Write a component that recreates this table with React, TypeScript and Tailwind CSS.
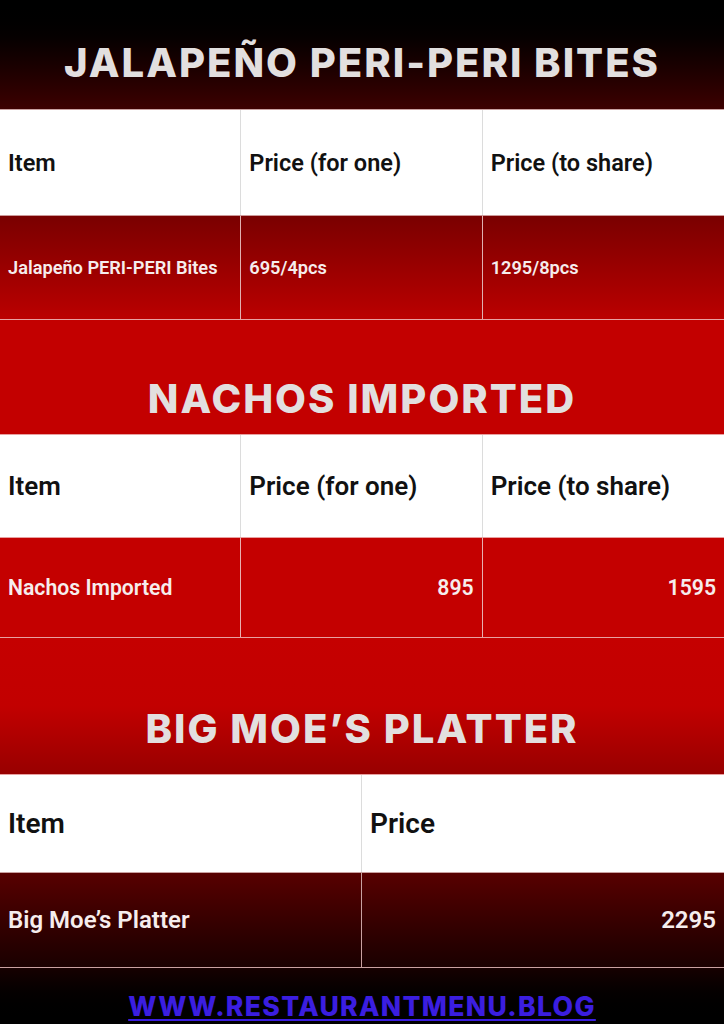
export default function App() {
  return (
    <div className="w-[724px] h-[1024px] flex flex-col overflow-hidden bg-black font-['Roboto',sans-serif]">
      {/* Jalapeño section */}
      <div className="h-[110px] flex items-center justify-center pt-[16px] bg-gradient-to-b from-[#000000] to-[#3d0000] border-b border-[#c9a0a0]">
        <h1 className="font-['Inter',sans-serif] font-extrabold text-[40px] tracking-[0.05em] text-[#e2dfdf] leading-none">
          JALAPEÑO PERI-PERI BITES
        </h1>
      </div>
      <div className="grid grid-cols-3 h-[105px] bg-white">
        <div className="flex items-center pl-[8px] pt-[2px] border-r border-[#dcdcdc] text-[23.5px] font-semibold text-[#111]">Item</div>
        <div className="flex items-center pl-[8px] pt-[2px] border-r border-[#dcdcdc] text-[23.5px] font-semibold text-[#111]">Price (for one)</div>
        <div className="flex items-center pl-[8px] pt-[2px] text-[23.5px] font-semibold text-[#111]">Price (to share)</div>
      </div>
      <div className="grid grid-cols-3 h-[104px] bg-gradient-to-b from-[#7a0000] to-[#bb0000] border-t border-[#c99]">
        <div className="flex items-center px-[8px] border-r border-[#e0b0b0] text-[18.2px] font-semibold text-[#f6eded]">Jalapeño PERI-PERI Bites</div>
        <div className="flex items-center px-[8px] border-r border-[#e0b0b0] text-[18.2px] font-semibold text-[#f6eded]">695/4pcs</div>
        <div className="flex items-center px-[8px] text-[18.2px] font-semibold text-[#f6eded]">1295/8pcs</div>
      </div>

      {/* Nachos section */}
      <div className="h-[116px] flex items-center justify-center pt-[44px] bg-[#c30000] border-t border-[#e8a0a0] border-b">
        <h2 className="font-['Inter',sans-serif] font-extrabold text-[40px] tracking-[0.05em] text-[#e2dfdf] leading-none">
          NACHOS IMPORTED
        </h2>
      </div>
      <div className="grid grid-cols-3 h-[102px] bg-white">
        <div className="flex items-center px-[8px] border-r border-[#dcdcdc] text-[26px] font-semibold text-[#111]">Item</div>
        <div className="flex items-center px-[8px] border-r border-[#dcdcdc] text-[26px] font-semibold text-[#111]">Price (for one)</div>
        <div className="flex items-center px-[8px] text-[26px] font-semibold text-[#111]">Price (to share)</div>
      </div>
      <div className="grid grid-cols-3 h-[100px] bg-[#c40000] border-t border-[#e8a0a0]">
        <div className="flex items-center px-[8px] border-r border-[#e8b0b0] text-[21.2px] font-semibold text-[#f6eded]">Nachos Imported</div>
        <div className="flex items-center justify-end px-[8px] border-r border-[#e8b0b0] text-[21.2px] font-semibold text-[#f6eded]">895</div>
        <div className="flex items-center justify-end px-[8px] text-[21.2px] font-semibold text-[#f6eded]">1595</div>
      </div>

      {/* Big Moe's section */}
      <div className="h-[138px] flex items-center justify-center pt-[46px] bg-gradient-to-b from-[#c50000] via-[#c20000] to-[#980000] border-t border-[#e8a0a0] border-b">
        <h2 className="font-['Inter',sans-serif] font-extrabold text-[40px] tracking-[0.05em] text-[#e2dfdf] leading-none">
          BIG MOE’S PLATTER
        </h2>
      </div>
      <div className="grid grid-cols-2 h-[97px] bg-white">
        <div className="flex items-center px-[8px] border-r border-[#dcdcdc] text-[28px] font-semibold text-[#111]">Item</div>
        <div className="flex items-center px-[8px] text-[28px] font-semibold text-[#111]">Price</div>
      </div>
      <div className="grid grid-cols-2 h-[96px] bg-gradient-to-b from-[#580000] to-[#1a0000] border-t border-b border-[#c9a0a0]">
        <div className="flex items-center px-[8px] border-r border-[#c9a0a0] text-[24px] font-semibold text-[#f6eded]">Big Moe’s Platter</div>
        <div className="flex items-center justify-end px-[8px] text-[24px] font-semibold text-[#f6eded]">2295</div>
      </div>

      {/* Footer */}
      <div className="flex-1 flex items-center justify-center pt-[20px] bg-gradient-to-b from-[#160000] to-[#000000]">
        <a className="font-['Inter',sans-serif] font-extrabold text-[26.6px] tracking-[0.05em] text-[#3b1ee0] underline underline-offset-[3px] leading-none">
          WWW.RESTAURANTMENU.BLOG
        </a>
      </div>
    </div>
  );
}
